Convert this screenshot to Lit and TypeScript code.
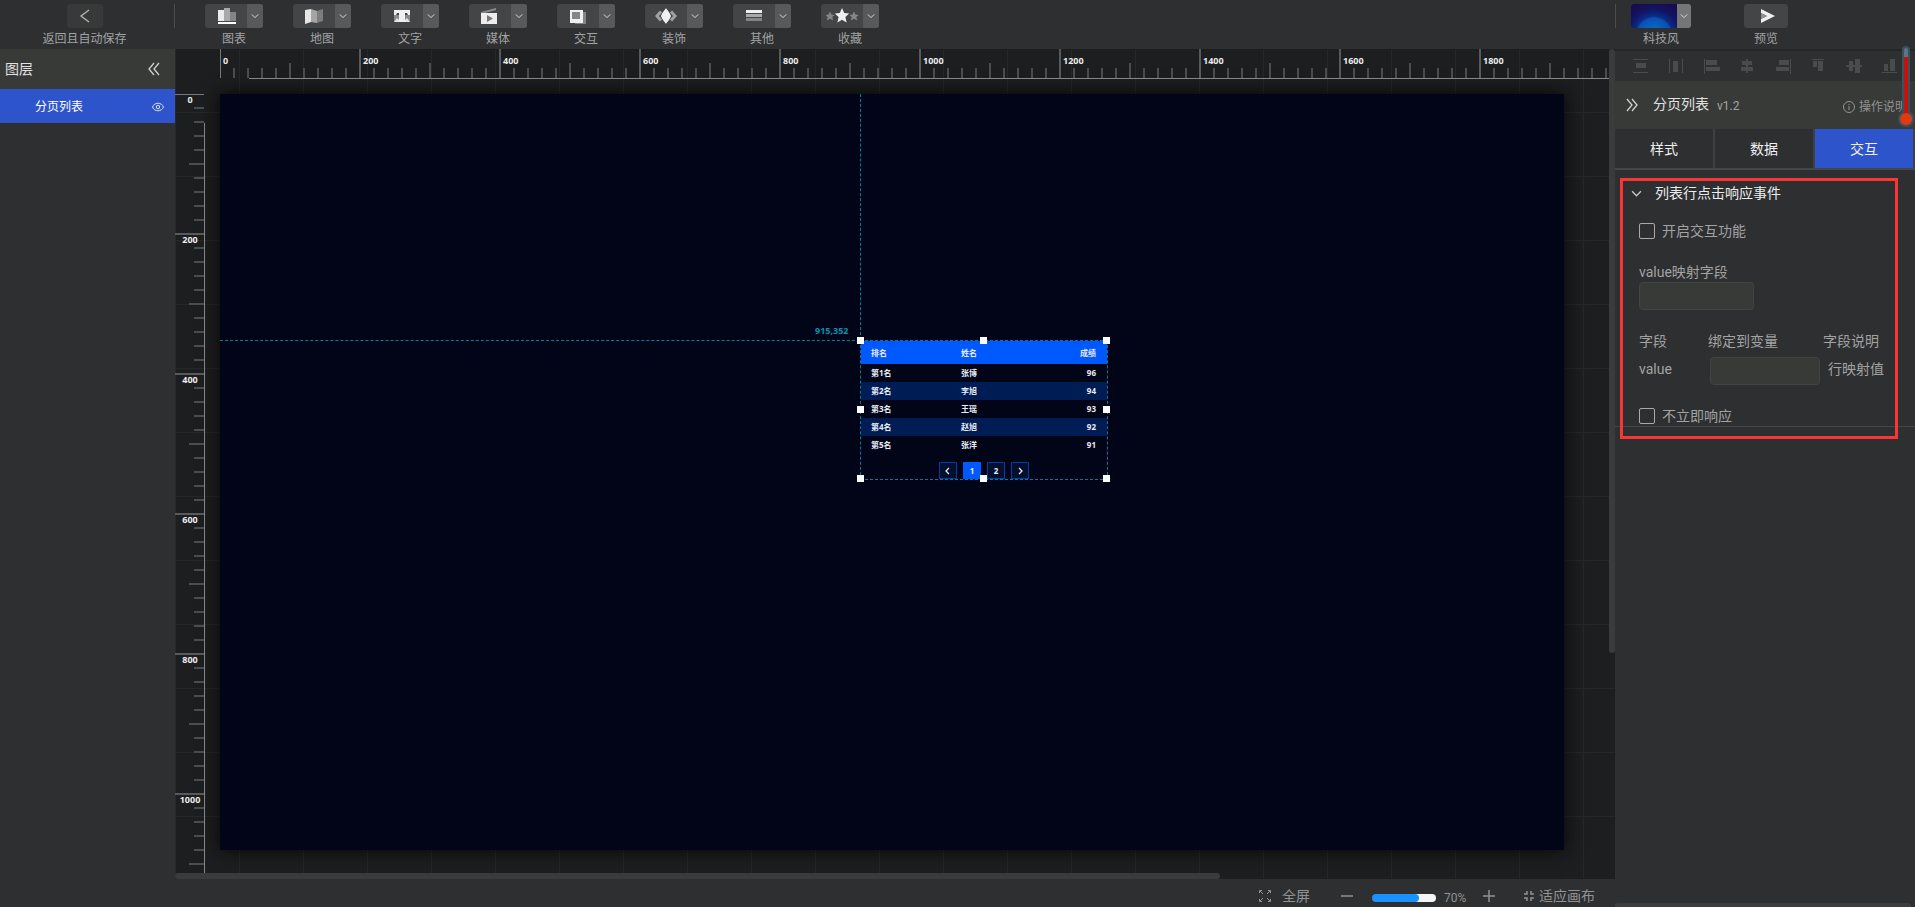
import { LitElement, html, svg, css, nothing } from "lit";
import { customElement, state } from "lit/decorators.js";
import { classMap } from "lit/directives/class-map.js";

const STEP = 14;
const ORIGIN = 45;

const toolIcons: Record<string, unknown> = {
  chart: svg`<rect x="3" y="4" width="6" height="11" fill="#ececec"/><rect x="9" y="2" width="6" height="13" fill="#a9a9a9"/><rect x="15" y="6" width="6" height="9" fill="#858585"/><rect x="3" y="16" width="18" height="2" fill="#fff"/>`,
  map: svg`<path d="M2 4l6-1v13l-6 2z" fill="#e6e6e6"/><path d="M8 3l6 2v12l-6-1z" fill="#a5a5a5"/><path d="M14 5l6-2v12l-6 2z" fill="#7d7d7d"/>`,
  text: svg`<path d="M3 9h5v7H3zM14 9h5v7h-5z" fill="#8a8a8a"/><path d="M3 16l3-4 2 2v2zM19 16l-3-4-2 2v2z" fill="#e4e4e4"/><path d="M3 4h16v5h-2l-1-2h-2v7l1 2H7l1-2V7H6L5 9H3z" fill="#f0f0f0"/>`,
  media: svg`<path d="M2 6l15-4v2L2 8z" fill="#8a8a8a"/><rect x="2" y="7" width="16" height="11" fill="#ececec"/><path d="M8 9l6 3.500-6 3.500z" fill="#777"/>`,
  interact: svg`<path d="M15 6h4v12H8v-2h7z" fill="#858585"/><rect x="3" y="4" width="13" height="13" fill="#f0f0f0"/><rect x="5" y="6" width="8" height="7" fill="#858585"/>`,
  decor: svg`<path d="M6 5.500L2 10l4 4.500M16 5.500l4 4.500-4 4.500" fill="none" stroke="#a0a0a0" stroke-width="3"/><path d="M11 2c1 2 3 3 5 8-2 5-4 6-5 8-1-2-3-3-5-8 2-5 4-6 5-8z" fill="#f0f0f0"/>`,
  other: svg`<rect x="3" y="4" width="16" height="3" fill="#f0f0f0"/><rect x="3" y="8" width="16" height="3" fill="#a9a9a9"/><rect x="3" y="12" width="16" height="3" fill="#858585"/>`,
  fav: svg`<path d="M11 2l2.200 5 5 .500-3.800 3.600 1.200 5.400-4.600-2.800-4.600 2.800 1.200-5.400L3.800 7.500l5-.500z" fill="#f0f0f0"/><path d="M-1 5.500l1.500 3 3.200.400-2.400 2.200.800 3.400L-1 12.800l-3.100 1.700.800-3.400-2.400-2.200 3.200-.400zM23 5.500l1.500 3 3.200.400-2.400 2.200.800 3.400-3.100-1.700-3.100 1.700.800-3.400-2.400-2.200 3.200-.400z" fill="#858585"/>`,
};

const tools = [
  ["chart", "图表"], ["map", "地图"], ["text", "文字"], ["media", "媒体"],
  ["interact", "交互"], ["decor", "装饰"], ["other", "其他"], ["fav", "收藏"],
];

const alignIcons: [string, unknown][] = [
  ["垂直分布", svg`<path d="M0 1h15v1H0zM0 14h15v1H0zM3 5h10v5H3z"/>`],
  ["水平分布", svg`<path d="M1 1h1v14H1zM14 1h1v14h-1zM5 3h5v11H5z"/>`],
  ["左对齐", svg`<path d="M0 1h1v15H0zM2 2h11v5H2zM2 9h14v4H2z"/>`],
  ["水平居中", svg`<path d="M7 1h2v14H7zM3 3h10v4H3zM2 9h12v4H2z"/>`],
  ["右对齐", svg`<path d="M15 1h1v15h-1zM4 2h10v5H4zM1 9h13v4H1z"/>`],
  ["顶对齐", svg`<path d="M2 1h12v1H2zM3 3h4v6H3zM8 3h5v10H8z"/>`],
  ["垂直居中", svg`<path d="M0 7h16v2H0zM3 3h4v10H3zM9 1h5v14H9z"/>`],
  ["底对齐", svg`<path d="M1 14h15v1H1zM3 6h4v7H3zM9 1h5v12H9z"/>`],
];

const rows = [
  ["第1名", "张博", "96"], ["第2名", "李旭", "94"], ["第3名", "王瑶", "93"],
  ["第4名", "赵旭", "92"], ["第5名", "张洋", "91"],
];

const chevron = (cls: string) => html`<svg class=${cls} viewBox="0 0 10 10" aria-hidden="true"><path d="M1 3l4 4 4-4" fill="none" stroke="currentColor" stroke-width="1.2"/></svg>`;

@customElement("canvas-rulers")
class CanvasRulers extends LitElement {
  @state() across = 0;
  @state() down = 0;
  private observer = new ResizeObserver(() => this.measure());

  static styles = css`
    :host { display: block; position: absolute; inset: 0 6px 0 0; pointer-events: none; }
    .plane { display: block; width: 100%; height: 100%; }
    .tick { stroke: #4b4c4e; stroke-width: 2; }
    .major { stroke: #58595b; stroke-width: 2; }
    .origin { stroke: #77787a; stroke-width: 1; }
    .base { stroke: #85868a; stroke-width: 1; }
    .num { fill: #ececec; font: bold 9px "Noto Sans", sans-serif; }
    .mid { text-anchor: middle; }
  `;

  connectedCallback() {
    super.connectedCallback();
    this.observer.observe(this);
    this.measure();
  }

  disconnectedCallback() {
    super.disconnectedCallback();
    this.observer.disconnect();
  }

  private measure() {
    this.across = this.clientWidth;
    this.down = this.clientHeight;
  }

  private positions(length: number) {
    return Array.from({ length: Math.max(0, Math.ceil((length - ORIGIN) / STEP)) }, (_, i) => i);
  }

  private kind(i: number) {
    return i === 0 ? "origin" : i % 10 === 0 ? "major" : "tick";
  }

  private size(i: number) {
    return i % 10 === 0 ? 29 : i % 5 === 0 ? 15 : 10;
  }

  render() {
    return html`<svg class="plane" shape-rendering="crispEdges">
      ${this.positions(this.across).map((i) => {
        const p = ORIGIN + i * STEP;
        return svg`<line class=${this.kind(i)} x1=${p} x2=${p} y1=${29 - this.size(i)} y2="29"/>
          ${i % 10 === 0 ? svg`<text class="num" x=${p + 3} y="15">${i * 20}</text>` : nothing}`;
      })}
      <line class="base" x1="74" x2="100%" y1="29.5" y2="29.5"/>
      ${this.positions(this.down).map((i) => {
        const p = ORIGIN + i * STEP;
        return svg`<line class=${this.kind(i)} x1=${29 - this.size(i)} x2="29" y1=${p} y2=${p}/>
          ${i % 10 === 0 ? svg`<text class="num mid" x="15" y=${p + 9}>${i * 20}</text>` : nothing}`;
      })}
      <line class="base" x1="29.5" x2="29.5" y1="74" y2="100%"/>
    </svg>`;
  }
}

@customElement("rank-widget")
class RankWidget extends LitElement {
  @state() page = 1;

  static styles = css`
    :host {
      display: block; position: absolute; left: 640px; top: 246px;
      width: 248px; height: 140px; box-sizing: border-box; padding: 1px;
      font-family: "Noto Sans", "Noto Sans CJK SC", sans-serif;
    }
    .list { width: 100%; border-collapse: collapse; table-layout: fixed; color: #e9ecf5; font-size: 8px; font-weight: 700; line-height: 12px; }
    .list th, .list td { box-sizing: border-box; padding: 0 11px 0 10px; }
    .list th { height: 23px; background: #0058ff; text-align: left; }
    .list td { height: 18px; }
    .list tbody tr:nth-child(even) { background: #001c54; }
    .list .rank { width: 90px; }
    .list .score { width: 80px; text-align: right; }
    .pager { display: flex; justify-content: center; gap: 6px; margin-top: 8px; }
    .page {
      width: 18px; height: 17px; padding: 0; border: 1px solid #0b3aa0; background: #020f2e;
      color: #e9ecf5; font: bold 8px "Noto Sans", sans-serif; display: grid; place-items: center;
    }
    .page.current { background: #0058ff; border-color: #0058ff; }
    .arrow { width: 8px; height: 8px; }
    .frame { position: absolute; inset: 0; border: 1px dashed #087a9c; pointer-events: none; }
    .handle { position: absolute; width: 7px; height: 7px; margin: -4px; background: #fff; }
    .left { left: 0; } .center { left: 50%; } .right { left: 100%; }
    .top { top: 0; } .middle { top: 50%; } .bottom { top: 100%; }
  `;

  render() {
    return html`
      <table class="list">
        <thead><tr><th class="rank">排名</th><th>姓名</th><th class="score">成绩</th></tr></thead>
        <tbody>${rows.map(([a, b, c]) => html`<tr><td>${a}</td><td>${b}</td><td class="score">${c}</td></tr>`)}</tbody>
      </table>
      <div class="pager">
        <button class="page" aria-label="上一页" @click=${() => (this.page = 1)}><svg class="arrow" viewBox="0 0 8 8"><path d="M5 1L2 4l3 3" fill="none" stroke="currentColor" stroke-width="1.3"/></svg></button>
        ${[1, 2].map((n) => html`<button class=${classMap({ page: true, current: this.page === n })} @click=${() => (this.page = n)}>${n}</button>`)}
        <button class="page" aria-label="下一页" @click=${() => (this.page = 2)}><svg class="arrow" viewBox="0 0 8 8"><path d="M3 1l3 3-3 3" fill="none" stroke="currentColor" stroke-width="1.3"/></svg></button>
      </div>
      <div class="frame">
        ${["left top", "center top", "right top", "left middle", "right middle", "left bottom", "center bottom", "right bottom"].map((p) => html`<i class="handle ${p}"></i>`)}
      </div>`;
  }
}

@customElement("app-root")
class AppRoot extends LitElement {
  @state() tab = "交互";

  static styles = css`
    :host {
      display: flex; flex-direction: column; height: 100vh; overflow: hidden; background: #2d2f31; color: #a3a3a3;
      font-family: "Roboto", "Noto Sans CJK SC", sans-serif; font-size: 14px; line-height: 20px;
    }
    *, *::before, *::after { box-sizing: border-box; }
    button { border: 0; padding: 0; margin: 0; font: inherit; color: inherit; background: none; cursor: pointer; }
    svg { display: block; overflow: visible; }

    .topbar { display: flex; flex: none; height: 49px; padding-top: 4px; font-size: 12px; line-height: 18px; }
    .back { width: 175px; display: flex; }
    .rule { width: 1px; height: 24px; background: #4c4d4f; }
    .tool { display: flex; flex-direction: column; align-items: center; gap: 2px; white-space: nowrap; }
    .back .tool { flex: 1; padding-right: 5px; }
    .backbtn { width: 36px; height: 24px; border-radius: 4px; background: #383a3a; display: grid; place-items: center; }
    .tools { flex: 1; display: flex; gap: 30px; padding-left: 30px; }
    .split { display: flex; height: 24px; border-radius: 3px; overflow: hidden; background: #444547; }
    .main { width: 42px; display: grid; place-items: center; }
    .toolicon { width: 22px; height: 20px; }
    .more { width: 16px; background: #585a59; display: grid; place-items: center; color: #ddd; }
    .chev { width: 8px; height: 8px; }
    .actions { width: 300px; display: flex; }
    .actions .theme { margin-left: 15px; }
    .actions .preview { margin-left: 53px; }
    .swatch { width: 46px; background: radial-gradient(circle at 50% 130%, #0878c8 0, #0a50b4 17px, #0a2c86 19px, #121464 26px, #160d50 34px); }
    .theme .more { width: 14px; background: #757677; }
    .playbtn { width: 44px; height: 24px; padding-left: 3px; border-radius: 3px; background: #444547; display: grid; place-items: center; }

    .body { flex: 1; min-height: 0; display: flex; }
    .layers { width: 175px; flex: none; }
    .layershead { height: 40px; padding: 0 15px 0 5px; display: flex; align-items: center; justify-content: space-between; background: #383a38; color: #e0e0e0; }
    .layer { width: 100%; height: 34px; padding: 2px 11px 0 35px; display: flex; align-items: center; justify-content: space-between; background: #2e54cc; color: #fff; font-size: 12px; }
    .dbl { width: 12px; height: 14px; color: #d0d0d0; }

    .center { flex: 1; min-width: 0; display: flex; flex-direction: column; }
    .workspace {
      flex: 1; position: relative; overflow: hidden; background-color: #1d1e20;
      background-image: linear-gradient(#27282a 1px, transparent 1px), linear-gradient(90deg, #27282a 1px, transparent 1px);
      background-size: 64px 64px; background-position: 0 -1px;
    }
    .screen { position: absolute; left: 45px; top: 45px; width: 1344px; height: 756px; background: #010517; box-shadow: 0 0 18px #050503; }
    .guidex { position: absolute; left: 0; top: 246px; width: 640px; border-top: 1px dashed #087a9c; }
    .guidey { position: absolute; left: 640px; top: 0; height: 246px; border-left: 1px dashed #087a9c; }
    .coord { position: absolute; left: 595px; top: 230px; color: #0a90b0; font: bold 9px/14px "Noto Sans", sans-serif; }
    .hbar { position: absolute; left: 0; bottom: 0; width: 72.6%; height: 6px; border-radius: 3px; background: #3a3b3b; }
    .vbar { position: absolute; right: 0; top: 0; height: 72.8%; width: 6px; border-radius: 3px; background: #3a3b3b; }

    .status { flex: none; height: 28px; padding: 6px 20px 0 0; display: flex; align-items: center; justify-content: flex-end; color: #919296; }
    .status button { display: flex; align-items: center; }
    .full { gap: 11px; margin-right: 31px; }
    .fit { gap: 5px; margin-left: 29px; }
    .zoom { appearance: none; width: 64px; height: 8px; margin: 4px 8px 0 19px; border-radius: 4px; background: linear-gradient(90deg, #1b90ff 67%, #f5f5f5 67%); }
    .zoom::-webkit-slider-thumb { appearance: none; width: 8px; height: 8px; border-radius: 4px; background: #1b90ff; }
    .pct { width: 39px; font-size: 12px; padding-top: 4px; }

    .panel { width: 300px; flex: none; position: relative; display: flex; flex-direction: column; }
    .aligns { height: 32px; border-top: 2px solid #252628; padding: 0 18px; display: flex; align-items: center; justify-content: space-between; }
    .aligns svg { width: 16px; height: 16px; fill: #4a4b4d; }
    .phead { height: 48px; padding: 0 8px 0 11px; display: flex; align-items: center; background: #383a38; white-space: nowrap; }
    .pname { margin: 0 8px 2px 15px; font-size: 14px; font-weight: 400; color: #e0e0e0; }
    .ver { font-size: 12px; flex: 1; padding-top: 2px; }
    .help { display: flex; align-items: center; gap: 4px; font-size: 12px; padding-top: 4px; color: #929292; text-decoration: none; }
    .tabs { display: flex; gap: 2px; padding-right: 2px; background: #3e4041; border-bottom: 2px solid #454648; height: 41px; }
    .tab { flex: 1; background: #2d2f31; color: #f0f0f0; }
    .tab.on { background: #2e54cc; }
    .section { position: relative; padding: 12px 16px 0 24px; border-bottom: 1px solid #454648; }
    .mark { position: absolute; left: 5px; right: 17px; top: 8px; bottom: -13px; border: 3px solid #fb3434; pointer-events: none; }
    .stitle { display: flex; align-items: center; gap: 13px; width: 100%; height: 22px; margin-left: -8px; color: #ececec; }
    .schev { width: 11px; height: 11px; color: #c8c8c8; }
    .check { display: flex; align-items: center; gap: 7px; height: 20px; margin-top: 17px; }
    .check input { appearance: none; width: 16px; height: 16px; margin: 0; border: 1px solid #a9a9a9; border-radius: 2px; }
    .flabel { display: block; height: 22px; margin-top: 19px; line-height: 24px; }
    .box { display: block; width: 115px; height: 28px; padding: 0 8px; background: #383a38; border: 1px solid #424443; border-radius: 4px; color: #ddd; outline: 0; }
    .fields { width: 100%; margin: 20px 0 21px; border-collapse: collapse; table-layout: fixed; white-space: nowrap; text-align: left; }
    .fields th { height: 22px; padding: 0; font-weight: 400; }
    .fields td { height: 33px; padding: 5px 0 0; vertical-align: top; line-height: 24px; }
    .fields .key { width: 69px; }
    .fields .bind { width: 115px; }
    .fields .box { width: 110px; margin-left: 2px; }
    .fields .desc { padding-left: 5px; }
    .fields + .check { margin-top: 0; }
    .pbar { margin: auto 4px 0 0; height: 4px; border-radius: 3px 3px 0 0; background: #3d3d3d; }
    .gauge { position: absolute; right: 1px; top: -3px; width: 16px; height: 82px; }
  `;

  render() {
    return html`
      <header class="topbar">
        <div class="back">
          <div class="tool">
            <button class="backbtn" aria-label="返回"><svg width="10" height="14" viewBox="0 0 10 14"><path d="M9 1L1 7l8 6" fill="none" stroke="#b5b5b5" stroke-width="1.3"/></svg></button>
            <span>返回且自动保存</span>
          </div>
          <i class="rule"></i>
        </div>
        <nav class="tools">
          ${tools.map(([id, name]) => html`<div class="tool">
            <div class="split">
              <button class="main" aria-label=${name}><svg class="toolicon" viewBox="0 0 22 20">${toolIcons[id]}</svg></button>
              <button class="more" aria-label="${name}列表">${chevron("chev")}</button>
            </div>
            <span>${name}</span>
          </div>`)}
        </nav>
        <div class="actions">
          <i class="rule"></i>
          <div class="tool theme">
            <div class="split"><button class="swatch" aria-label="科技风"></button><button class="more" aria-label="主题列表">${chevron("chev")}</button></div>
            <span>科技风</span>
          </div>
          <div class="tool preview">
            <button class="playbtn" aria-label="预览"><svg width="14" height="14" viewBox="0 0 14 14"><path d="M0 0l14 7-14 7v-4l6-3-6-3z" fill="#f0f0f0"/><path d="M0 4l6 3-6 3z" fill="#8d8d8d"/></svg></button>
            <span>预览</span>
          </div>
        </div>
      </header>

      <div class="body">
        <aside class="layers">
          <div class="layershead"><span>图层</span>
            <button aria-label="收起图层"><svg class="dbl" viewBox="0 0 12 14"><path d="M6 1L1 7l5 6M11 1L6 7l5 6" fill="none" stroke="currentColor" stroke-width="1.300"/></svg></button></div>
          <button class="layer"><span>分页列表</span>
            <svg width="12" height="12" viewBox="0 0 12 12" fill="none" stroke="#dfe6ff"><path d="M.500 6C2.500 1 9.500 1 11.500 6 9.500 11 2.500 11 .500 6z"/><circle cx="6" cy="6" r="1.700"/></svg></button>
        </aside>

        <main class="center">
          <div class="workspace">
            <div class="screen">
              <i class="guidex"></i><i class="guidey"></i>
              <span class="coord">915,352</span>
              <rank-widget></rank-widget>
            </div>
            <canvas-rulers></canvas-rulers>
            <i class="hbar"></i><i class="vbar"></i>
          </div>
          <footer class="status">
            <button class="full"><svg width="12" height="12" viewBox="0 0 12 12" fill="none" stroke="currentColor"><path d="M.500 3V.500H3M1 1l3 3M9 .500h2.500V3M11 1L8 4M.500 9v2.500H3M1 11l3-3M9 11.500h2.500V9M11 11L8 8"/></svg>全屏</button>
            <button aria-label="缩小"><svg width="12" height="12"><path d="M0 6h12" stroke="currentColor" stroke-width="1.500"/></svg></button>
            <input class="zoom" type="range" min="0" max="100" value="70" aria-label="缩放">
            <span class="pct">70%</span>
            <button aria-label="放大"><svg width="12" height="12"><path d="M0 6h12M6 0v12" stroke="currentColor" stroke-width="1.500"/></svg></button>
            <button class="fit"><svg width="10" height="10" viewBox="0 0 10 10" fill="none" stroke="currentColor" stroke-width="1.500"><path d="M0 3h3V0M7 0v3h3M0 7h3v3M7 10V7h3"/></svg>适应画布</button>
          </footer>
        </main>

        <aside class="panel">
          <div class="aligns">${alignIcons.map(([name, icon]) => html`<button aria-label=${name}><svg viewBox="0 0 16 16">${icon}</svg></button>`)}</div>
          <div class="phead">
            <button aria-label="收起面板"><svg class="dbl" viewBox="0 0 12 14"><path d="M1 1l5 6-5 6M6 1l5 6-5 6" fill="none" stroke="currentColor" stroke-width="1.300"/></svg></button>
            <h2 class="pname">分页列表</h2><span class="ver">v1.2</span>
            <a class="help" href="#"><svg width="12" height="12" viewBox="0 0 12 12" fill="none" stroke="currentColor"><circle cx="6" cy="6" r="5.500"/><path d="M6 5v4M6 3v1"/></svg><span>操作说明</span></a>
          </div>
          <div class="tabs" role="tablist">${["样式", "数据", "交互"].map((t) => html`<button role="tab" aria-selected=${this.tab === t} class=${classMap({ tab: true, on: this.tab === t })} @click=${() => (this.tab = t)}>${t}</button>`)}</div>
          <section class="section">
            <button class="stitle">${chevron("schev")}<span>列表行点击响应事件</span></button>
            <label class="check"><input type="checkbox"><span>开启交互功能</span></label>
            <label class="flabel" for="map">value映射字段</label>
            <input class="box" id="map" type="text">
            <table class="fields">
              <thead><tr><th class="key">字段</th><th class="bind">绑定到变量</th><th>字段说明</th></tr></thead>
              <tbody><tr><td><label for="bind">value</label></td><td><input class="box" id="bind" type="text"></td><td class="desc">行映射值</td></tr></tbody>
            </table>
            <label class="check"><input type="checkbox"><span>不立即响应</span></label>
            <i class="mark"></i>
          </section>
          <i class="pbar"></i>
          <svg class="gauge" viewBox="0 0 16 82" aria-hidden="true">
            <path d="M4 4a4 4 0 0 1 8 0v62H4z" fill="#3d505e"/><circle cx="8" cy="73" r="8" fill="#3d505e"/>
            <path d="M6 4a2 2 0 0 1 4 0v8H6z" fill="#5b7488"/><rect x="6" y="11" width="4" height="60" fill="#c0140c"/><circle cx="8" cy="73" r="6" fill="#df3a12"/>
          </svg>
        </aside>
      </div>`;
  }
}
